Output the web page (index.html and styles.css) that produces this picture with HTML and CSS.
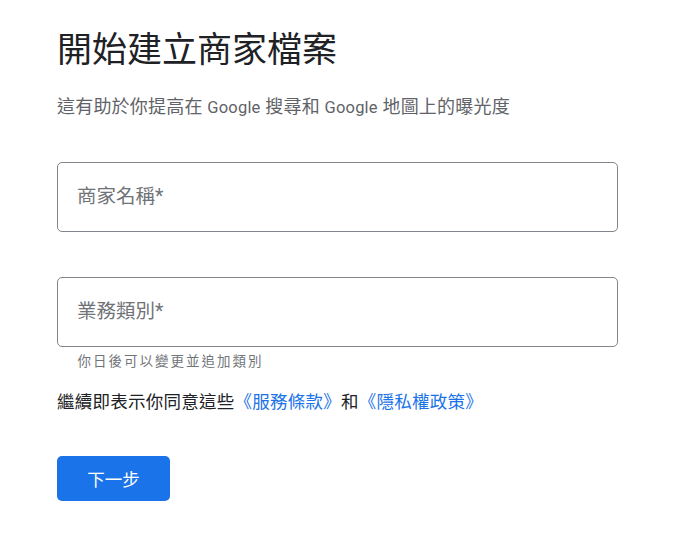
FILE: index.html
```html
<!DOCTYPE html>
<html lang="zh-Hant">
<head>
<meta charset="utf-8">
<title>開始建立商家檔案</title>
<link rel="stylesheet" href="styles.css">
</head>
<body>
<main class="page">
  <h1 class="title">開始建立商家檔案</h1>
  <p class="subtitle">這有助於你提高在 <span class="latin">Google</span> 搜尋和 <span class="latin">Google</span> 地圖上的曝光度</p>

  <div class="field field-first"><span class="placeholder">商家名稱*</span></div>

  <div class="field field-second"><span class="placeholder">業務類別*</span></div>
  <p class="helper">你日後可以變更並追加類別</p>

  <p class="terms">繼續即表示你同意這些<a href="#" class="link">《服務條款》</a>和<a href="#" class="link">《隱私權政策》</a></p>

  <button class="next" type="button">下一步</button>
</main>
</body>
</html>
```

FILE: styles.css
```css
html, body {
  margin: 0;
  padding: 0;
  background: #ffffff;
}

body {
  font-family: Roboto, "Noto Sans CJK TC", "Noto Sans", sans-serif;
  color: #202124;
}

.page {
  display: flex;
  flex-direction: column;
  align-items: flex-start;
  padding: 29px 0 0 57px;
  width: 561px;
}

.title {
  margin: 0;
  font-size: 35px;
  line-height: 44px;
  font-weight: 400;
  color: #202124;
}

.subtitle {
  margin: 22px 0 0;
  font-size: 18px;
  line-height: 24px;
  letter-spacing: 0.2px;
  color: #5f6368;
}

.latin {
  font-size: 16.5px;
}

.field {
  box-sizing: border-box;
  width: 561px;
  height: 70px;
  border: 1px solid #80868b;
  border-radius: 5px;
  display: flex;
  align-items: center;
  padding-left: 19px;
}

.field-first {
  margin-top: 42px;
}

.field-second {
  margin-top: 45px;
}

.placeholder {
  font-size: 19.5px;
  line-height: 24px;
  color: #6f7378;
}

.helper {
  margin: 5px 0 0;
  padding-left: 20.5px;
  font-size: 13.5px;
  line-height: 18px;
  letter-spacing: 2px;
  color: #70757a;
}

.terms {
  margin: 19.5px 0 0;
  font-size: 17.5px;
  line-height: 24px;
  letter-spacing: 0.25px;
  color: #202124;
}

.link {
  color: #1a73e8;
  text-decoration: none;
}

.next {
  margin-top: 42.5px;
  width: 113px;
  height: 45px;
  border: none;
  border-radius: 5px;
  background: #1a73e8;
  color: #ffffff;
  font-family: Roboto, "Noto Sans CJK TC", sans-serif;
  font-size: 17.5px;
  cursor: pointer;
}
```
